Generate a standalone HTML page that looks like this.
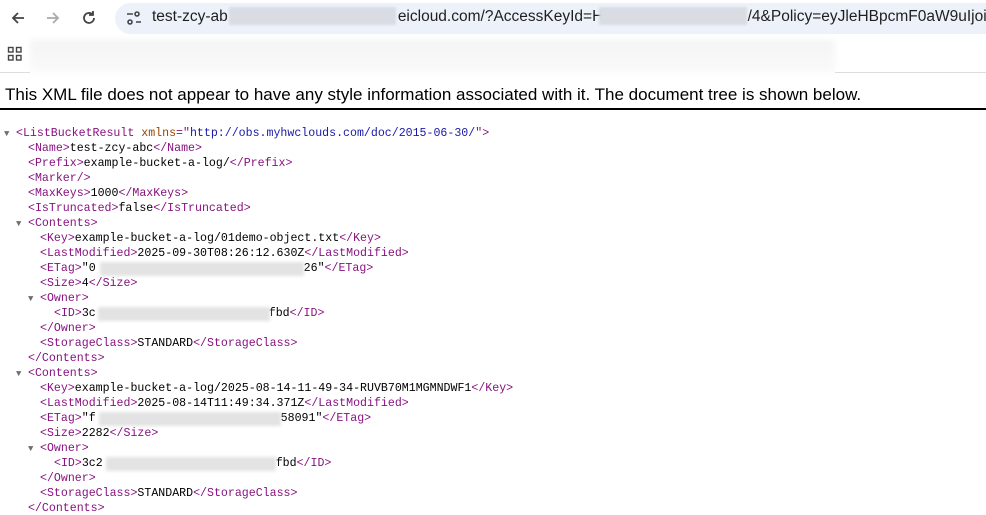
<!DOCTYPE html>
<html><head><meta charset="utf-8"><style>
html,body{margin:0;width:986px;height:515px;overflow:hidden}
body{background:#fff;position:relative;font-family:"Liberation Sans",sans-serif}
.abs{position:absolute}
.pill{left:115px;top:3px;width:900px;height:31px;background:#edf2fa;border-radius:16px}
.url{left:152px;top:8px;font-size:15.5px;color:#1f1f1f;white-space:nowrap}
.blur{background:#d9dce3;filter:blur(1px)}
.bm{left:30px;top:40px;width:805px;height:33px;background:linear-gradient(#f4f4f4,#fafafa);filter:blur(3px)}
.msg{left:5px;top:85px;font-size:17px;color:#000;white-space:nowrap}
.rule{left:0;top:108px;width:986px;height:2px;background:#000}
#x{position:absolute;left:0;top:126px;font-family:"Liberation Mono",monospace;font-size:11.6px;line-height:15px;color:#000}
#x div{height:15px;white-space:pre}
.t{color:#881280}.a{color:#994500}.v{color:#1a1aa6}
.tri{display:inline-block;width:12px;color:#6e6e6e;font-size:9px}
.g{position:absolute;background:#e3e3e3;filter:blur(1.5px)}
</style></head><body>
<div class="abs pill"></div>
<svg class="abs" style="left:8px;top:8px" width="20" height="20" viewBox="0 0 20 20"><path d="M16 10H5M10 5l-5 5 5 5" stroke="#444" stroke-width="1.8" fill="none"/></svg>
<svg class="abs" style="left:43px;top:8px" width="20" height="20" viewBox="0 0 20 20"><path d="M4 10h11M10 5l5 5-5 5" stroke="#aaa" stroke-width="1.8" fill="none"/></svg>
<svg class="abs" style="left:79px;top:8px" width="20" height="20" viewBox="0 0 20 20"><path d="M15 10a5 5 0 1 1-1.5-3.6M14 3v4h-4" stroke="#444" stroke-width="1.8" fill="none"/></svg>
<svg class="abs" style="left:124px;top:8px" width="20" height="20" viewBox="0 0 20 20"><path d="M3 6h6M12 14h5" stroke="#444" stroke-width="1.6"/><circle cx="13" cy="6" r="2" fill="none" stroke="#444" stroke-width="1.6"/><circle cx="6" cy="14" r="2" fill="none" stroke="#444" stroke-width="1.6"/></svg>
<div class="abs url">test-zcy-ab<span style="display:inline-block;width:170px"></span>eicloud.com/?AccessKeyId=HS<span style="display:inline-block;width:134px"></span>/4&amp;Policy=eyJleHBpcmF0aW9uIjoiM</div>
<div class="abs blur" style="left:229px;top:7px;width:167px;height:18px"></div>
<div class="abs blur" style="left:599px;top:7px;width:148px;height:18px"></div>
<svg class="abs" style="left:7px;top:46px" width="16" height="16" viewBox="0 0 16 16"><g fill="none" stroke="#444" stroke-width="1.4"><rect x="1.5" y="1.5" width="4.5" height="4.5"/><rect x="9.5" y="1.5" width="4.5" height="4.5"/><rect x="1.5" y="9.5" width="4.5" height="4.5"/><rect x="9.5" y="9.5" width="4.5" height="4.5"/></g></svg>
<div class="abs bm"></div>
<div class="abs" style="left:0;top:72px;width:30px;height:1px;background:#ddd"></div>
<div class="abs" style="left:835px;top:72px;width:151px;height:1px;background:#ddd"></div>
<div class="abs msg">This XML file does not appear to have any style information associated with it. The document tree is shown below.</div>
<div class="abs rule"></div>
<div id="x"><div><span class="tri" style="margin-left:4px">▼</span><span class="t">&lt;ListBucketResult</span> <span class="a">xmlns</span><span class="t">="</span><span class="v">http://obs.myhwclouds.com/doc/2015-06-30/</span><span class="t">"&gt;</span></div><div style="padding-left:28px"><span class="t">&lt;Name&gt;</span>test-zcy-abc<span class="t">&lt;/Name&gt;</span></div><div style="padding-left:28px"><span class="t">&lt;Prefix&gt;</span>example-bucket-a-log/<span class="t">&lt;/Prefix&gt;</span></div><div style="padding-left:28px"><span class="t">&lt;Marker/&gt;</span></div><div style="padding-left:28px"><span class="t">&lt;MaxKeys&gt;</span>1000<span class="t">&lt;/MaxKeys&gt;</span></div><div style="padding-left:28px"><span class="t">&lt;IsTruncated&gt;</span>false<span class="t">&lt;/IsTruncated&gt;</span></div><div style="padding-left:16px"><span class="tri">▼</span><span class="t">&lt;Contents&gt;</span></div><div style="padding-left:40px"><span class="t">&lt;Key&gt;</span>example-bucket-a-log/01demo-object.txt<span class="t">&lt;/Key&gt;</span></div><div style="padding-left:40px"><span class="t">&lt;LastModified&gt;</span>2025-09-30T08:26:12.630Z<span class="t">&lt;/LastModified&gt;</span></div><div style="padding-left:40px"><span class="t">&lt;ETag&gt;</span>"0<span style="display:inline-block;width:208px"></span>26"<span class="t">&lt;/ETag&gt;</span></div><div style="padding-left:40px"><span class="t">&lt;Size&gt;</span>4<span class="t">&lt;/Size&gt;</span></div><div style="padding-left:28px"><span class="tri">▼</span><span class="t">&lt;Owner&gt;</span></div><div style="padding-left:54px"><span class="t">&lt;ID&gt;</span>3c<span style="display:inline-block;width:173px"></span>fbd<span class="t">&lt;/ID&gt;</span></div><div style="padding-left:40px"><span class="t">&lt;/Owner&gt;</span></div><div style="padding-left:40px"><span class="t">&lt;StorageClass&gt;</span>STANDARD<span class="t">&lt;/StorageClass&gt;</span></div><div style="padding-left:28px"><span class="t">&lt;/Contents&gt;</span></div><div style="padding-left:16px"><span class="tri">▼</span><span class="t">&lt;Contents&gt;</span></div><div style="padding-left:40px"><span class="t">&lt;Key&gt;</span>example-bucket-a-log/2025-08-14-11-49-34-RUVB70M1MGMNDWF1<span class="t">&lt;/Key&gt;</span></div><div style="padding-left:40px"><span class="t">&lt;LastModified&gt;</span>2025-08-14T11:49:34.371Z<span class="t">&lt;/LastModified&gt;</span></div><div style="padding-left:40px"><span class="t">&lt;ETag&gt;</span>"f<span style="display:inline-block;width:185px"></span>58091"<span class="t">&lt;/ETag&gt;</span></div><div style="padding-left:40px"><span class="t">&lt;Size&gt;</span>2282<span class="t">&lt;/Size&gt;</span></div><div style="padding-left:28px"><span class="tri">▼</span><span class="t">&lt;Owner&gt;</span></div><div style="padding-left:54px"><span class="t">&lt;ID&gt;</span>3c2<span style="display:inline-block;width:173px"></span>fbd<span class="t">&lt;/ID&gt;</span></div><div style="padding-left:40px"><span class="t">&lt;/Owner&gt;</span></div><div style="padding-left:40px"><span class="t">&lt;StorageClass&gt;</span>STANDARD<span class="t">&lt;/StorageClass&gt;</span></div><div style="padding-left:28px"><span class="t">&lt;/Contents&gt;</span></div></div>
<div class="g" style="left:100px;top:262px;width:204px;height:14px"></div>
<div class="g" style="left:98px;top:307px;width:172px;height:14px"></div>
<div class="g" style="left:99px;top:412px;width:182px;height:14px"></div>
<div class="g" style="left:106px;top:457px;width:170px;height:14px"></div>
</body></html>
